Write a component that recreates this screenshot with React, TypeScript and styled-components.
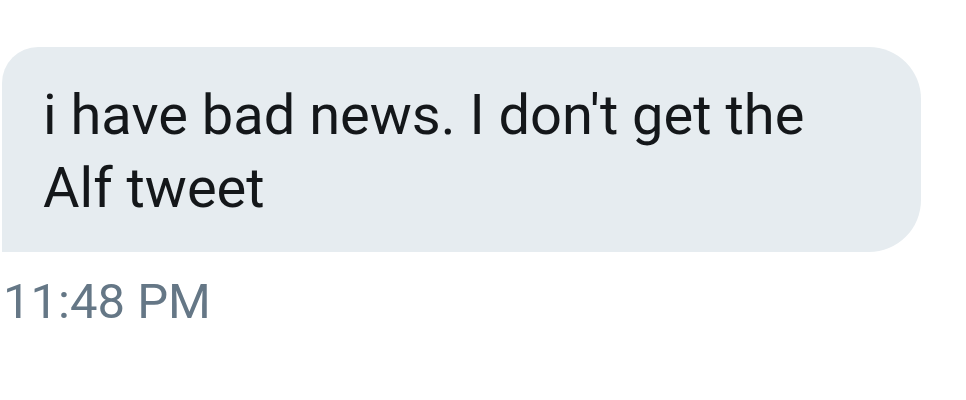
import { styled, createGlobalStyle } from "styled-components";

const GlobalStyle = createGlobalStyle`
  body {
    margin: 0;
    background: #ffffff;
    font-family: "Roboto", "Liberation Sans", sans-serif;
  }
`;

function App() {
  return (
    <>
      <GlobalStyle />
      <Thread>
        <Message>
          <Bubble>i have bad news. I don't get the Alf tweet</Bubble>
          <Timestamp>11:48 PM</Timestamp>
        </Message>
      </Thread>
    </>
  );
}

export default App;

const Thread = styled.div`
  display: flex;
  flex-direction: column;
  padding: 47px 0 0 2px;
  height: 400px;
  box-sizing: border-box;
`;

const Message = styled.div`
  display: flex;
  flex-direction: column;
  align-items: flex-start;
  gap: 22px;
`;

const Bubble = styled.div`
  width: 919px;
  height: 205px;
  box-sizing: border-box;
  padding: 32px 80px 0 41px;
  background: #e6ecf0;
  color: #14171a;
  font-size: 56px;
  line-height: 73px;
  border-radius: 36px 52px 52px 0;
`;

const Timestamp = styled.div`
  color: #657786;
  font-size: 49px;
  line-height: 56px;
  padding-left: 1px;
`;
